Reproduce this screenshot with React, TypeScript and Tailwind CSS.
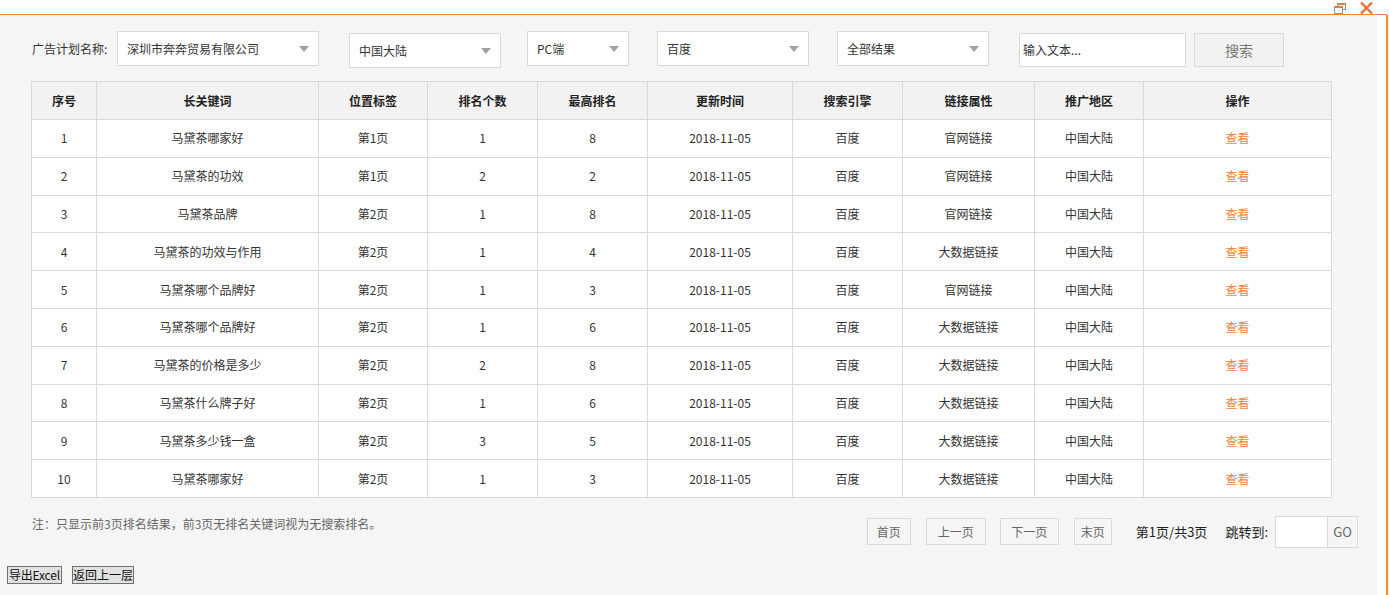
import React from "react";

const gridCols =
  "grid grid-cols-[65px_222px_109px_110px_110px_145px_110px_132px_109px_188px]";

const headers = ["序号", "长关键词", "位置标签", "排名个数", "最高排名", "更新时间", "搜索引擎", "链接属性", "推广地区", "操作"];

const rows: [string, string, string, string, string, string][] = [
  ["1", "马黛茶哪家好", "第1页", "1", "8", "官网链接"],
  ["2", "马黛茶的功效", "第1页", "2", "2", "官网链接"],
  ["3", "马黛茶品牌", "第2页", "1", "8", "官网链接"],
  ["4", "马黛茶的功效与作用", "第2页", "1", "4", "大数据链接"],
  ["5", "马黛茶哪个品牌好", "第2页", "1", "3", "官网链接"],
  ["6", "马黛茶哪个品牌好", "第2页", "1", "6", "大数据链接"],
  ["7", "马黛茶的价格是多少", "第2页", "2", "8", "大数据链接"],
  ["8", "马黛茶什么牌子好", "第2页", "1", "6", "大数据链接"],
  ["9", "马黛茶多少钱一盒", "第2页", "3", "5", "大数据链接"],
  ["10", "马黛茶哪家好", "第2页", "1", "3", "大数据链接"],
];

function Arrow() {
  return (
    <svg width="10" height="6" viewBox="0 0 10 6" className="shrink-0">
      <path d="M0 0 H10 L5 6 Z" fill="#a0a0a0" />
    </svg>
  );
}

function Select({ w, text, mt, mlClass }: { w: string; text: string; mt: string; mlClass: string }) {
  return (
    <div
      className={`${w} ${mt} ${mlClass} h-[35px] bg-white border border-[#d9d9d9] flex items-center justify-between pl-[9px] pr-[9px] text-[12px] text-[#333]`}
    >
      <span className="leading-[16px]">{text}</span>
      <Arrow />
    </div>
  );
}

function Cell({ children, className = "", h = "h-[37.8px]" }: { children: React.ReactNode; className?: string; h?: string }) {
  return (
    <div className={`${h} border-r border-b border-[#d9d9d9] flex items-center justify-center text-[12px] leading-[16px] ${className}`}>
      {children}
    </div>
  );
}

function PageBtn({ w, text }: { w: string; text: string }) {
  return (
    <div className={`${w} h-[27px] border border-[#d9d9d9] flex items-center justify-center text-[12px] text-[#666] leading-[16px]`}>
      {text}
    </div>
  );
}

export default function App() {
  return (
    <div className="w-[1389px] h-[595px] bg-white overflow-hidden font-['Microsoft_YaHei','Noto_Sans_CJK_SC','Noto_Sans',sans-serif] text-[#333]">
      {/* top bar */}
      <div className="w-[1387px] h-[15px] border-b border-[#f0883c] flex items-start justify-end pr-[14px]">
        <div className="flex items-start gap-[14px] pt-[2px]">
          <svg width="12" height="11" viewBox="0 0 12 11" className="mt-[1px]">
            <rect x="3.5" y="0.5" width="8" height="6" fill="none" stroke="#c9874f" strokeWidth="1" />
            <rect x="3" y="0" width="9" height="2" fill="#c9874f" />
            <rect x="0.5" y="3.5" width="8" height="7" fill="#fff" stroke="#c9874f" strokeWidth="1" />
            <rect x="0" y="3" width="9" height="2" fill="#c9874f" />
          </svg>
          <svg width="13" height="12" viewBox="0 0 13 12">
            <path d="M1 0.5 L12 11.5 M12 0.5 L1 11.5" stroke="#f07038" strokeWidth="2.4" />
          </svg>
        </div>
      </div>

      <div className="flex h-[580px]">
        {/* gray content area */}
        <div className="w-[1377px] h-full bg-[#f5f5f5] flex flex-col">
          {/* filter row */}
          <div className="flex items-start pt-[16px] h-[52px]">
            <div className="w-[117px] pl-[32px] h-[35px] flex items-center text-[12px] leading-[16px] text-[#333]">
              广告计划名称:
            </div>
            <Select w="w-[202px]" text="深圳市奔奔贸易有限公司" mt="mt-0" mlClass="ml-0" />
            <Select w="w-[152px]" text="中国大陆" mt="mt-[2px]" mlClass="ml-[30px]" />
            <Select w="w-[102px]" text="PC端" mt="mt-0" mlClass="ml-[26px]" />
            <Select w="w-[152px]" text="百度" mt="mt-0" mlClass="ml-[28px]" />
            <Select w="w-[152px]" text="全部结果" mt="mt-0" mlClass="ml-[28px]" />
            <div className="ml-[30px] mt-[2px] w-[167px] h-[34px] bg-white border border-[#d9d9d9] flex items-center pl-[3px] text-[12px] leading-[16px] text-[#333]">
              输入文本...
            </div>
            <div className="ml-[8px] mt-[2px] w-[90px] h-[34px] bg-[#f2f2f2] border border-[#d9d9d9] flex items-center justify-center text-[14px] leading-[18px] text-[#777]">
              搜索
            </div>
          </div>

          {/* table */}
          <div className="ml-[31px] mt-[14px] w-[1301px] border-l border-t border-[#d9d9d9] bg-white">
            <div className={`${gridCols} bg-[#f2f2f2]`}>
              {headers.map((h) => (
                <Cell key={h} h="h-[38px]" className="font-bold text-[#222]">
                  {h}
                </Cell>
              ))}
            </div>
            {rows.map((r) => (
              <div key={r[0]} className={gridCols}>
                <Cell>{r[0]}</Cell>
                <Cell>{r[1]}</Cell>
                <Cell>{r[2]}</Cell>
                <Cell>{r[3]}</Cell>
                <Cell>{r[4]}</Cell>
                <Cell>2018-11-05</Cell>
                <Cell>百度</Cell>
                <Cell>{r[5]}</Cell>
                <Cell>中国大陆</Cell>
                <Cell className="text-[#f38236]">查看</Cell>
              </div>
            ))}
          </div>

          {/* note + pagination */}
          <div className="flex items-start mt-[18px] pl-[32px] pr-[19px] h-[32px]">
            <div className="text-[12px] leading-[16px] text-[#666]">
              注：只显示前3页排名结果，前3页无排名关键词视为无搜索排名。
            </div>
            <div className="ml-auto flex items-center h-[32px]">
              <PageBtn w="w-[44px]" text="首页" />
              <div className="w-[15px]" />
              <PageBtn w="w-[60px]" text="上一页" />
              <div className="w-[14px]" />
              <PageBtn w="w-[59px]" text="下一页" />
              <div className="w-[15px]" />
              <PageBtn w="w-[38px]" text="末页" />
              <div className="ml-[24px] text-[13px] leading-[16px] text-[#222]">第1页/共3页</div>
              <div className="ml-[18px] text-[13px] leading-[16px] text-[#222]">跳转到:</div>
              <div className="ml-[7px] w-[53px] h-[32px] bg-white border border-[#d9d9d9]" />
              <div className="w-[30px] h-[32px] border border-l-0 border-[#d9d9d9] flex items-center justify-center text-[13px] text-[#666]">
                GO
              </div>
            </div>
          </div>

          {/* bottom buttons */}
          <div className="flex items-start mt-[18px] pl-[7px] gap-[10px]">
            <div className="h-[18px] px-[1px] bg-[#e1e1e1] border border-[#707070] flex items-center text-[12px] leading-[14px] text-[#111] tracking-[-0.2px]">
              导出Excel
            </div>
            <div className="h-[18px] px-0 bg-[#e1e1e1] border border-[#707070] flex items-center text-[12px] leading-[14px] text-[#111]">
              返回上一层
            </div>
          </div>
        </div>
        <div className="w-[9px] h-full bg-white" />
        <div className="w-[2px] h-full bg-[#f0883c]" />
        <div className="flex-1 h-full bg-white" />
      </div>
    </div>
  );
}
